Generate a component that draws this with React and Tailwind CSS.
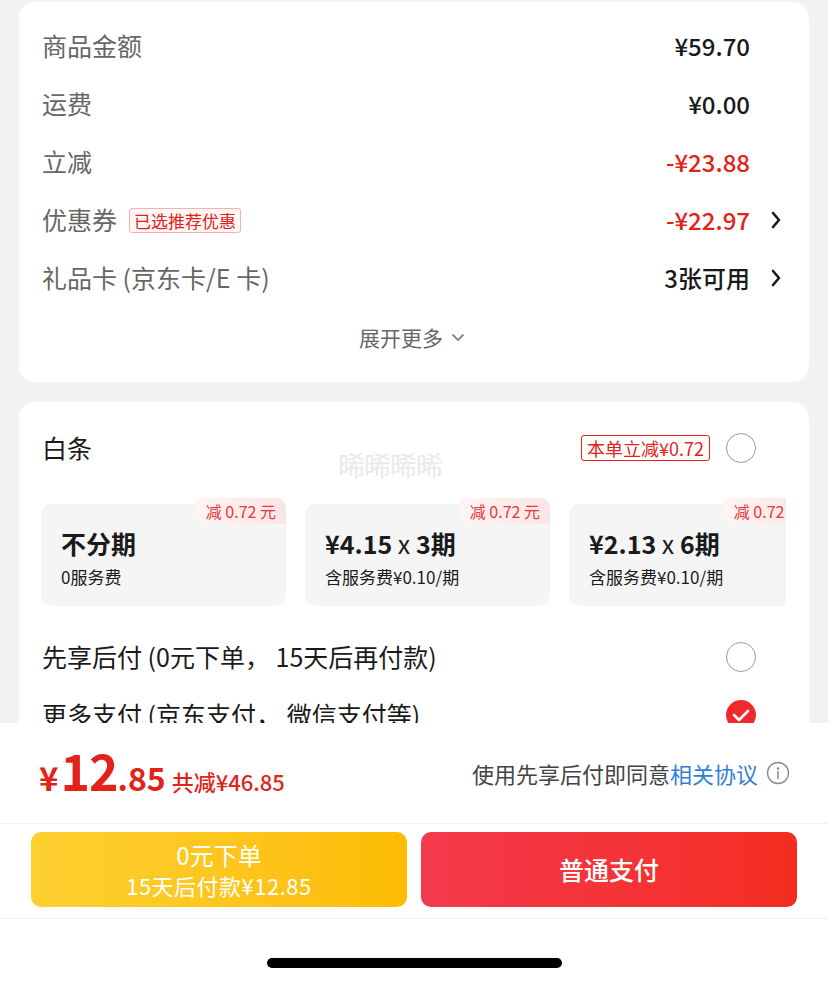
import React from "react";

const Chevron = () => (
  <svg width="12" height="18" viewBox="0 0 12 18" className="ml-[20px]">
    <polyline points="3,2 9,9 3,16" fill="none" stroke="#1a1a1a" strokeWidth="2.6" strokeLinecap="round" strokeLinejoin="round" />
  </svg>
);

const Radio = () => <div className="w-[30px] h-[30px] rounded-full border-[1.5px] border-[#9a9a9a] bg-white" />;

const Checked = () => (
  <div className="w-[30px] h-[30px] rounded-full bg-[#f0292c] flex items-center justify-center">
    <svg width="18" height="14" viewBox="0 0 18 14">
      <polyline points="2,7 7,12 16,3" fill="none" stroke="#fff" strokeWidth="2.6" strokeLinecap="round" strokeLinejoin="round" />
    </svg>
  </div>
);

const Row = ({ label, badge, value, red, arrow }) => (
  <div className="flex items-center h-[58px]">
    <span className="text-[25px] text-[#666]">{label}</span>
    {badge && (
      <span className="ml-[12px] px-[4px] h-[25px] flex items-center text-[17px] leading-none text-[#e2231a] border border-[#f2b2ae] bg-[#fff6f5] rounded-[3px]">
        {badge}
      </span>
    )}
    <span className={`ml-auto text-[24px] font-medium ${red ? "text-[#e2231a]" : "text-[#1a1a1a]"}`}>{value}</span>
    {arrow ? <Chevron /> : <span className="w-[32px]" />}
  </div>
);

const Plan = ({ title, sub }) => (
  <div className="relative shrink-0 w-[245px] h-[102px] rounded-[10px] bg-[#f5f5f5] pl-[20px] pt-[23px]">
    <div className="absolute right-0 top-[-6px] h-[26px] px-[10px] flex items-center rounded-tr-[10px] rounded-bl-[10px] bg-gradient-to-r from-[#fff4f4] to-[#fde4e4] text-[16px] text-[#e4393c]">
      减 0.72 元
    </div>
    <div className="text-[25px] font-bold text-[#1a1a1a] leading-[32px]">{title}</div>
    <div className="text-[17px] text-[#1a1a1a] mt-[6px] leading-[24px]">{sub}</div>
  </div>
);

export default function App() {
  return (
    <div className="w-[828px] h-[984px] bg-[#f2f2f2] font-['Noto_Sans_CJK_SC','Noto_Sans',sans-serif] flex flex-col overflow-hidden">
      <div className="h-[723px] overflow-hidden px-[19px] pt-[2px]">
        <div className="bg-white rounded-[16px] pl-[23px] pr-[27px] pt-[15px] pb-[19px]">
          <Row label="商品金额" value="¥59.70" />
          <Row label="运费" value="¥0.00" />
          <Row label="立减" value="-¥23.88" red />
          <Row label="优惠券" badge="已选推荐优惠" value="-¥22.97" red arrow />
          <Row label="礼品卡 (京东卡/E 卡)" value="3张可用" arrow />
          <div className="h-[56px] pt-[6px] flex items-center justify-center text-[21px] text-[#666]">
            展开更多
            <svg width="14" height="10" viewBox="0 0 14 10" className="ml-[8px]">
              <polyline points="2,2 7,7 12,2" fill="none" stroke="#888" strokeWidth="1.8" strokeLinecap="round" strokeLinejoin="round" />
            </svg>
          </div>
        </div>

        <div className="relative bg-white rounded-[16px] mt-[20px] pt-[16px]">
          <div className="absolute left-[319px] top-[43px] text-[27px] text-[#eaeaea] tracking-[-1px]">晞晞晞晞</div>
          <div className="flex items-center h-[60px] pl-[23px] pr-[53px]">
            <span className="text-[25px] text-[#1a1a1a]">白条</span>
            <span className="ml-auto px-[5px] h-[26px] flex items-center text-[18px] leading-none text-[#e2231a] border border-[#e2231a] rounded-[3px]">
              本单立减¥0.72
            </span>
            <span className="ml-[16px]"><Radio /></span>
          </div>
          <div className="flex gap-[19px] pl-[22px] mr-[23px] mt-[20px] overflow-hidden pt-[6px]">
            <Plan title="不分期" sub="0服务费" />
            <Plan title={<>¥4.15 <span className="font-normal">x</span> 3期</>} sub="含服务费¥0.10/期" />
            <Plan title={<>¥2.13 <span className="font-normal">x</span> 6期</>} sub="含服务费¥0.10/期" />
          </div>
          <div className="flex items-center h-[58px] mt-[22px] pl-[23px] pr-[53px]">
            <span className="text-[25px] text-[#1a1a1a]">先享后付 (0元下单， 15天后再付款)</span>
            <span className="ml-auto"><Radio /></span>
          </div>
          <div className="flex items-center h-[58px] pl-[23px] pr-[53px]">
            <span className="text-[25px] text-[#1a1a1a]">更多支付 (京东支付， 微信支付等)</span>
            <span className="ml-auto"><Checked /></span>
          </div>
        </div>
      </div>

      <div className="flex-1 bg-white flex flex-col">
        <div className="h-[101px] flex items-center pl-[39px] pr-[38px] border-b border-[#f0f0f0]">
          <div className="flex items-baseline text-[#e2231a]">
            <span className="text-[33px] font-bold">¥</span>
            <span className="text-[50px] font-bold leading-none ml-[2px] tracking-[-1px]">12</span>
            <span className="text-[32px] font-bold">.85</span>
            <span className="text-[22px] font-medium ml-[6px]">共减¥46.85</span>
          </div>
          <div className="ml-auto flex items-center text-[22px] text-[#444]">
            使用先享后付即同意<span className="text-[#2f7fd8]">相关协议</span>
            <svg width="24" height="24" viewBox="0 0 24 24" className="ml-[8px]">
              <circle cx="12" cy="12" r="10.5" fill="none" stroke="#888" strokeWidth="1.3" />
              <circle cx="12" cy="7.5" r="1.2" fill="#888" />
              <line x1="12" y1="10.5" x2="12" y2="17.5" stroke="#888" strokeWidth="1.5" strokeLinecap="round" />
            </svg>
          </div>
        </div>
        <div className="flex gap-[14px] px-[31px] pt-[8px] pb-[11px] border-b border-[#f0f0f0]">
          <div className="flex-1 h-[75px] rounded-[10px] bg-gradient-to-r from-[#fdd02f] to-[#fdbc00] flex flex-col items-center justify-center text-white">
            <span className="text-[24px] leading-[30px]">0元下单</span>
            <span className="text-[22px] leading-[30px] tracking-[0.5px]">15天后付款¥12.85</span>
          </div>
          <div className="flex-1 h-[75px] rounded-[10px] bg-gradient-to-r from-[#f3394b] to-[#f52d1f] flex items-center justify-center text-white text-[25px] font-medium">
            普通支付
          </div>
        </div>
        <div className="flex-1 flex items-center justify-center pt-[22px]">
          <div className="w-[295px] h-[10px] rounded-full bg-black" />
        </div>
      </div>
    </div>
  );
}
